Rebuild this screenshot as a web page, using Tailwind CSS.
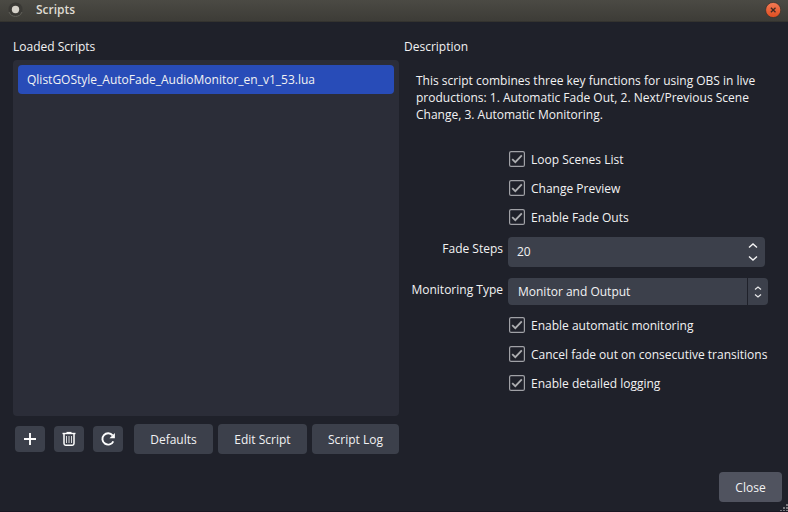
<!DOCTYPE html>
<html lang="en">
<head>
<meta charset="utf-8">
<title>Scripts</title>
<script src="https://cdn.jsdelivr.net/npm/@tailwindcss/browser@4"></script>
</head>
<body class="w-[788px] h-[512px] overflow-hidden bg-[#1f212a] font-['Open_Sans','Noto_Sans',sans-serif] text-[12px] leading-[17px] text-[#f2f2f3]">
<svg class="hidden">
  <symbol id="check" viewBox="0 0 16 16"><rect x=".6" y=".6" width="14.8" height="14.8" rx="1.5" fill="none" stroke="#a0a1a6" stroke-width="1.2"/><path d="M3.2 8.2 6.3 11.200 12.800 4.400" fill="none" stroke="#adaeb1" stroke-width="1.800"/></symbol>
</svg>
<div class="relative flex flex-col w-full h-full border-b border-[#191622]">
  <header class="flex items-center h-[22px] shrink-0 bg-linear-to-b from-[#4b4a44] to-[#3d3c37] border-b border-[#34332f] pr-[7px] pl-[7px]">
    <svg class="w-4 h-4 -mt-[3px]" viewBox="0 0 16 16"><circle cx="8.500" cy="8.500" r="7" fill="#3a3935"/><path d="M2 11a7 7 0 0 0 13 0" fill="none" stroke="#62615b"/><circle cx="8.500" cy="8.500" r="3.700" fill="#d5d1c9"/></svg>
    <h1 class="ml-[13px] -mt-[3px] text-[12px] font-semibold text-[#dfdbd2]">Scripts</h1>
    <svg class="ml-auto w-4 h-4 -mt-[2px]" viewBox="0 0 16 16"><defs><linearGradient id="g" x2="0" y2="1"><stop stop-color="#f37b55"/><stop offset="1" stop-color="#df4d20"/></linearGradient></defs><circle cx="8.200" cy="8" r="7.600" fill="url(#g)" stroke="#35302c" stroke-width=".7"/><path d="m5.900 5.700 4.600 4.600m0-4.600-4.600 4.600" stroke="#402a22" stroke-width="1.300"/></svg>
  </header>
  <main class="flex flex-1 pl-[13px]">
    <section class="w-[386px] flex flex-col pt-4">
      <h2>Loaded Scripts</h2>
      <div class="mt-[5px] h-[356px] rounded-[4px] bg-[#2b2d38] p-[5px]">
        <div class="h-[29px] rounded-[4px] bg-[#284cb8] flex items-center pl-[9px]">QlistGOStyle_AutoFade_AudioMonitor_en_v1_53.lua</div>
      </div>
      <div class="mt-2 flex items-center h-[30px] pl-[2px]">
        <button class="w-[30px] h-[26px] rounded-[4px] bg-[#3c404b] flex items-center justify-center"><svg class="w-4 h-4" viewBox="0 0 16 16"><path d="M8 2v12M2 8h12" stroke="#fefefe" stroke-width="1.900"/></svg></button>
        <button class="ml-[9px] w-[30px] h-[26px] rounded-[4px] bg-[#3c404b] flex items-center justify-center"><svg class="w-4 h-4" viewBox="0 0 16 16" fill="none" stroke="#fefefe"><path d="M1.500 2.500h13" stroke-width="1.400"/><path d="M5.500 1.500h5" stroke-width="1.200"/><path d="M3 3v9.500q0 1.700 1.700 1.700h6.600q1.700 0 1.700-1.700V3" stroke-width="1.500"/><path d="M5.500 5v7M8 5v7M10.500 5v7" stroke-width="1" stroke="#d8d9db"/></svg></button>
        <button class="ml-[9px] w-[30px] h-[26px] rounded-[4px] bg-[#3c404b] flex items-center justify-center"><svg class="w-4 h-4" viewBox="0 0 16 16"><path d="M12.600 4.400A5.700 5.700 0 1 0 13.300 10.300" fill="none" stroke="#fefefe" stroke-width="1.900"/><path d="M14.900 1.900V7.300H9.500Z" fill="#fefefe"/></svg></button>
        <button class="ml-[11px] w-[79px] h-[30px] rounded-[4px] bg-[#3c404b]">Defaults</button>
        <button class="ml-[5px] w-[89px] h-[30px] rounded-[4px] bg-[#3c404b]">Edit Script</button>
        <button class="ml-[5px] w-[87px] h-[30px] rounded-[4px] bg-[#3c404b]">Script Log</button>
      </div>
    </section>
    <section class="ml-[5px] w-[384px] flex flex-col pt-4">
      <h2>Description</h2>
      <p class="mt-[17px] ml-3 whitespace-nowrap">This script combines three key functions for using OBS in live<br>productions: 1. Automatic Fade Out, 2. Next/Previous Scene<br>Change, 3. Automatic Monitoring.</p>
      <div class="mt-[22px] ml-[105px] flex flex-col">
        <label class="flex h-[29px] items-center gap-[6px]"><svg class="w-4 h-4 mb-[2px]"><use href="#check"/></svg>Loop Scenes List</label>
        <label class="flex h-[29px] items-center gap-[6px]"><svg class="w-4 h-4 mb-[2px]"><use href="#check"/></svg>Change Preview</label>
        <label class="flex h-[29px] items-center gap-[6px]"><svg class="w-4 h-4 mb-[2px]"><use href="#check"/></svg>Enable Fade Outs</label>
      </div>
      <div class="mt-[5px] flex h-[30px]">
        <span class="w-[99px] mr-[5px] pt-[3px] text-right">Fade Steps</span>
        <div class="w-[257px] rounded-[4px] bg-[#3c404b] flex items-center justify-between pl-[9px] pr-[7px]"><span class="mb-[2px]">20</span>
          <svg class="w-[10px] h-[20px]" viewBox="0 0 10 20" fill="none" stroke="#f4f4f5" stroke-width="1.400"><path d="M1 5.500 5 2l4 3.500M1 14.500 5 18l4-3.500"/></svg>
        </div>
      </div>
      <div class="mt-[11px] flex h-[27px]">
        <span class="w-[99px] mr-[5px] pt-[3px] text-right whitespace-nowrap">Monitoring Type</span>
        <div class="w-[239px] rounded-l-[4px] bg-[#3c404b] flex items-center pl-[10px]">Monitor and Output</div>
        <div class="ml-px w-[20px] rounded-r-[4px] bg-[#3c404b] flex items-center justify-center"><svg class="w-2 h-3" viewBox="0 0 8 12" fill="none" stroke="#e8e8ea" stroke-width="1.200"><path d="M1 3.500 4 1l3 2.500M1 8.500 4 11l3-2.500"/></svg></div>
      </div>
      <div class="mt-[6px] ml-[105px] flex flex-col whitespace-nowrap">
        <label class="flex h-[29px] items-center gap-[6px]"><svg class="w-4 h-4 mb-[2px]"><use href="#check"/></svg>Enable automatic monitoring</label>
        <label class="flex h-[29px] items-center gap-[6px]"><svg class="w-4 h-4 mb-[2px]"><use href="#check"/></svg>Cancel fade out on consecutive transitions</label>
        <label class="flex h-[29px] items-center gap-[6px]"><svg class="w-4 h-4 mb-[2px]"><use href="#check"/></svg>Enable detailed logging</label>
      </div>
    </section>
  </main>
  <footer class="flex justify-end pr-[6px] h-[39px]"><button class="w-[63px] h-[30px] rounded-[4px] bg-[#50535f]">Close</button></footer>
  <svg class="absolute right-0 bottom-0 w-[9px] h-[7px]" viewBox="0 0 9 7" fill="#77777c"><path d="M7 0h2v2H7zM7 3h2v2H7zM4 3h2v2H4zM7 6h2v1H7zM4 6h2v1H4zM1 6h2v1H1z"/></svg>
</div>
</body>
</html>
